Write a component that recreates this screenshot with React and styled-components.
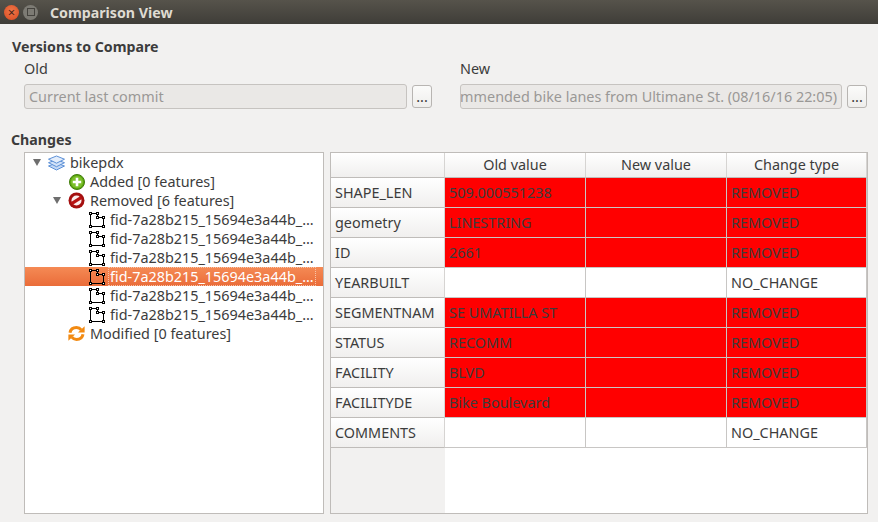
import React from "react";
import styled, { createGlobalStyle } from "styled-components";

const GlobalStyle = createGlobalStyle`
  html, body {
    margin: 0;
    padding: 0;
    background: #f2f1f0;
  }
  * {
    box-sizing: border-box;
  }
`;

const FONT = `"Noto Sans", "Open Sans", sans-serif`;

const FID = "fid-7a28b215_15694e3a44b_…";

const rows = [
  { name: "SHAPE_LEN", old: "509.000551238", type: "REMOVED" },
  { name: "geometry", old: "LINESTRING", type: "REMOVED" },
  { name: "ID", old: "2661", type: "REMOVED" },
  { name: "YEARBUILT", old: "", type: "NO_CHANGE" },
  { name: "SEGMENTNAM", old: "SE UMATILLA ST", type: "REMOVED" },
  { name: "STATUS", old: "RECOMM", type: "REMOVED" },
  { name: "FACILITY", old: "BLVD", type: "REMOVED" },
  { name: "FACILITYDE", old: "Bike Boulevard", type: "REMOVED" },
  { name: "COMMENTS", old: "", type: "NO_CHANGE" },
];

function LayersIcon() {
  return (
    <svg width="17" height="16" viewBox="0 0 17 16">
      <path d="M8.5 8 L16.5 11 L8.5 15 L0.5 11 Z" fill="#c3d8f5" stroke="#5b8fd6" strokeWidth="1" />
      <path d="M8.5 4.7 L16.5 7.7 L8.5 11.7 L0.5 7.7 Z" fill="#d2e2f8" stroke="#5b8fd6" strokeWidth="1" />
      <path d="M8.5 1 L16.5 4.2 L8.5 8.2 L0.5 4.2 Z" fill="#e3edfb" stroke="#5b8fd6" strokeWidth="1" />
    </svg>
  );
}

function AddedIcon() {
  return (
    <svg width="16" height="16" viewBox="0 0 16 16">
      <circle cx="8" cy="8" r="7.5" fill="#5da60f" stroke="#3f7d0a" strokeWidth="1" />
      <circle cx="8" cy="8" r="6" fill="#7cc02c" />
      <path d="M8 3.8 V12.2 M3.8 8 H12.2" stroke="#ffffff" strokeWidth="2.6" />
    </svg>
  );
}

function RemovedIcon() {
  return (
    <svg width="17" height="17" viewBox="0 0 17 17">
      <circle cx="8.5" cy="8.5" r="8" fill="#a40f0f" />
      <circle cx="8.5" cy="8.5" r="5" fill="#fbeeee" />
      <path d="M3.6 11.6 L13.4 5.4" stroke="#b81313" strokeWidth="3.2" />
    </svg>
  );
}

function FeatureIcon() {
  return (
    <svg width="16" height="16" viewBox="0 0 16 16">
      <path d="M1.5 1.5 H8.5 V5.5 H14.5 V14.5 H1.5 Z" fill="none" stroke="#000000" strokeWidth="1" />
      {[
        [1.5, 1.5],
        [8.5, 1.5],
        [8.5, 5.5],
        [14.5, 5.5],
        [14.5, 14.5],
        [1.5, 14.5],
      ].map(([x, y]) => (
        <rect key={`${x}-${y}`} x={x - 1} y={y - 1} width="2" height="2" fill="#ffffff" stroke="#000000" strokeWidth="1" />
      ))}
    </svg>
  );
}

function ModifiedIcon() {
  return (
    <svg width="17" height="15" viewBox="0 0 17 15">
      <path d="M2 6.8 C2.6 3.4 5.4 1.6 8.5 1.6 C10.6 1.6 12.2 2.5 13.2 3.8" fill="none" stroke="#f28a12" strokeWidth="3" />
      <path d="M10 6.4 L16.6 6.4 L16.6 0.2 Z" fill="#f28a12" />
      <path d="M15 8.2 C14.4 11.6 11.6 13.4 8.5 13.4 C6.4 13.4 4.8 12.5 3.8 11.2" fill="none" stroke="#f28a12" strokeWidth="3" />
      <path d="M7 8.6 L0.4 8.6 L0.4 14.8 Z" fill="#f28a12" />
    </svg>
  );
}

function TreeItem({ depth, open, selected, icon, children }) {
  return (
    <TreeRow $depth={depth} $selected={selected}>
      <ArrowSlot>{open && <Arrow />}</ArrowSlot>
      <IconSlot>{icon}</IconSlot>
      <TreeLabel $selected={selected}>{children}</TreeLabel>
    </TreeRow>
  );
}

function BrowseField({ label, value, $wide }) {
  return (
    <Version>
      <FieldLabel>{label}</FieldLabel>
      <FieldRow>
        <Field $wide={$wide}>
          <span>{value}</span>
        </Field>
        <DotsButton>...</DotsButton>
      </FieldRow>
    </Version>
  );
}

export default function App() {
  return (
    <Window>
      <GlobalStyle />
      <TitleBar>
        <CloseButton>×</CloseButton>
        <MinButton />
        <Title>Comparison View</Title>
      </TitleBar>
      <Content>
        <SectionTitle>Versions to Compare</SectionTitle>
        <Versions>
          <BrowseField label="Old" value="Current last commit" />
          <BrowseField label="New" value="Recommended bike lanes from Ultimane St. (08/16/16 22:05)" $wide />
        </Versions>
        <ChangesTitle>Changes</ChangesTitle>
        <Panels>
          <Tree>
            <TreeItem depth={0} open icon={<LayersIcon />}>bikepdx</TreeItem>
            <TreeItem depth={1} icon={<AddedIcon />}>Added [0 features]</TreeItem>
            <TreeItem depth={1} open icon={<RemovedIcon />}>Removed [6 features]</TreeItem>
            <TreeItem depth={2} icon={<FeatureIcon />}>{FID}</TreeItem>
            <TreeItem depth={2} icon={<FeatureIcon />}>{FID}</TreeItem>
            <TreeItem depth={2} icon={<FeatureIcon />}>{FID}</TreeItem>
            <TreeItem depth={2} selected icon={<FeatureIcon />}>{FID}</TreeItem>
            <TreeItem depth={2} icon={<FeatureIcon />}>{FID}</TreeItem>
            <TreeItem depth={2} icon={<FeatureIcon />}>{FID}</TreeItem>
            <TreeItem depth={1} icon={<ModifiedIcon />}>Modified [0 features]</TreeItem>
          </Tree>
          <TablePanel>
            <HeaderRow>
              <Corner />
              <ColumnHead>Old value</ColumnHead>
              <ColumnHead>New value</ColumnHead>
              <ColumnHead>Change type</ColumnHead>
            </HeaderRow>
            {rows.map((row) => (
              <DataRow key={row.name}>
                <RowHead>{row.name}</RowHead>
                <Cell $removed={row.type === "REMOVED"}>{row.old}</Cell>
                <Cell $removed={row.type === "REMOVED"} />
                <Cell $removed={row.type === "REMOVED"}>{row.type}</Cell>
              </DataRow>
            ))}
            <TableRest>
              <RestHeader />
            </TableRest>
          </TablePanel>
        </Panels>
      </Content>
    </Window>
  );
}

const Window = styled.div`
  width: 878px;
  height: 522px;
  display: flex;
  flex-direction: column;
  overflow: hidden;
  background: #f2f1f0;
  font-family: ${FONT};
  font-size: 14.4px;
  color: #3c3c3c;
`;

const TitleBar = styled.div`
  height: 24px;
  flex: none;
  display: flex;
  align-items: center;
  padding-left: 4px;
  background: linear-gradient(#56534b, #3f3d38);
`;

const CloseButton = styled.div`
  width: 15px;
  height: 15px;
  border-radius: 50%;
  background: radial-gradient(circle at 50% 40%, #f0784a, #d9491f);
  color: #4a2418;
  font-size: 13px;
  line-height: 14px;
  text-align: center;
`;

const MinButton = styled.div`
  width: 15px;
  height: 15px;
  margin-left: 4px;
  border-radius: 50%;
  background: #7d7b74;
  display: flex;
  align-items: center;
  justify-content: center;

  &::after {
    content: "";
    width: 6px;
    height: 6px;
    border: 1px solid #45433e;
  }
`;

const Title = styled.div`
  margin-left: 12px;
  font-weight: 700;
  font-size: 14.2px;
  color: #dfdbd2;
`;

const Content = styled.div`
  flex: 1;
  display: flex;
  flex-direction: column;
  padding: 13px 10px 8px 11px;
`;

const SectionTitle = styled.div`
  height: 19px;
  line-height: 19px;
  margin-left: 1px;
  font-weight: 700;
  font-size: 14.2px;
`;

const ChangesTitle = styled(SectionTitle)`
  margin: 0;
`;

const Versions = styled.div`
  display: flex;
  gap: 28px;
  height: 74px;
  padding: 3px 0 0 13px;
`;

const Version = styled.div`
  display: flex;
  flex-direction: column;
  gap: 6px;
`;

const FieldLabel = styled.div`
  height: 19px;
  line-height: 19px;
`;

const FieldRow = styled.div`
  display: flex;
  align-items: center;
  gap: 5px;
`;

const Field = styled.div`
  width: ${(p) => (p.$wide ? "382px" : "383px")};
  height: 25px;
  display: flex;
  align-items: center;
  justify-content: ${(p) => (p.$wide ? "flex-end" : "flex-start")};
  padding: 0 4px;
  overflow: hidden;
  white-space: nowrap;
  background: #eae8e6;
  border: 1px solid #c6c3c0;
  border-radius: 3px;
  color: #9a9896;

  span {
    flex: none;
  }
`;

const DotsButton = styled.div`
  width: 20px;
  height: 23px;
  text-align: center;
  line-height: 21px;
  background: linear-gradient(#fbfbfa, #efeeec);
  border: 1px solid #b8b5b2;
  border-radius: 3px;
`;

const Panels = styled.div`
  flex: 1;
  display: flex;
  gap: 6px;
  padding-left: 13px;
  margin-top: 3px;
`;

const Tree = styled.div`
  width: 300px;
  background: #ffffff;
  border: 1px solid #bfbcb9;
`;

const TreeRow = styled.div`
  height: 19px;
  display: flex;
  align-items: center;
  padding-left: ${(p) => 8 + p.$depth * 20}px;
  background: ${(p) => (p.$selected ? "linear-gradient(#f58a55, #ea6c39)" : "transparent")};
`;

const ArrowSlot = styled.div`
  width: 15px;
  flex: none;
`;

const Arrow = styled.div`
  width: 0;
  height: 0;
  border-left: 4.5px solid transparent;
  border-right: 4.5px solid transparent;
  border-top: 7px solid #6e6e6e;
`;

const IconSlot = styled.div`
  width: 17px;
  height: 19px;
  flex: none;
  display: flex;
  align-items: center;
  justify-content: center;
`;

const TreeLabel = styled.div`
  margin-left: 3px;
  padding: 0 2px;
  height: 19px;
  line-height: 19px;
  white-space: nowrap;
  color: ${(p) => (p.$selected ? "#ffffff" : "#3c3c3c")};
  outline: ${(p) => (p.$selected ? "1px dotted #f7c4a8" : "none")};
  outline-offset: -1px;
`;

const TablePanel = styled.div`
  width: 538px;
  display: flex;
  flex-direction: column;
  background: #ffffff;
  border: 1px solid #bfbcb9;
`;

const HeaderRow = styled.div`
  display: grid;
  grid-template-columns: 114px 141px 141px 140px;
  height: 25px;
  flex: none;
`;

const DataRow = styled(HeaderRow)`
  height: 30px;
`;

const Corner = styled.div`
  background: linear-gradient(#ffffff, #f0efee);
  border-right: 1px solid #d6d4d2;
  border-bottom: 1px solid #bfbcb9;
`;

const ColumnHead = styled(Corner)`
  text-align: center;
  line-height: 24px;
`;

const RowHead = styled(Corner)`
  padding-left: 4px;
  line-height: 29px;
  white-space: nowrap;
`;

const Cell = styled.div`
  padding-left: 4px;
  line-height: 29px;
  white-space: nowrap;
  background: ${(p) => (p.$removed ? "#ff0000" : "#ffffff")};
  border-right: 1px solid #c8c6c4;
  border-bottom: 1px solid #c8c6c4;
`;

const TableRest = styled.div`
  flex: 1;
  display: flex;
`;

const RestHeader = styled.div`
  width: 114px;
  background: #f2f1f0;
`;
